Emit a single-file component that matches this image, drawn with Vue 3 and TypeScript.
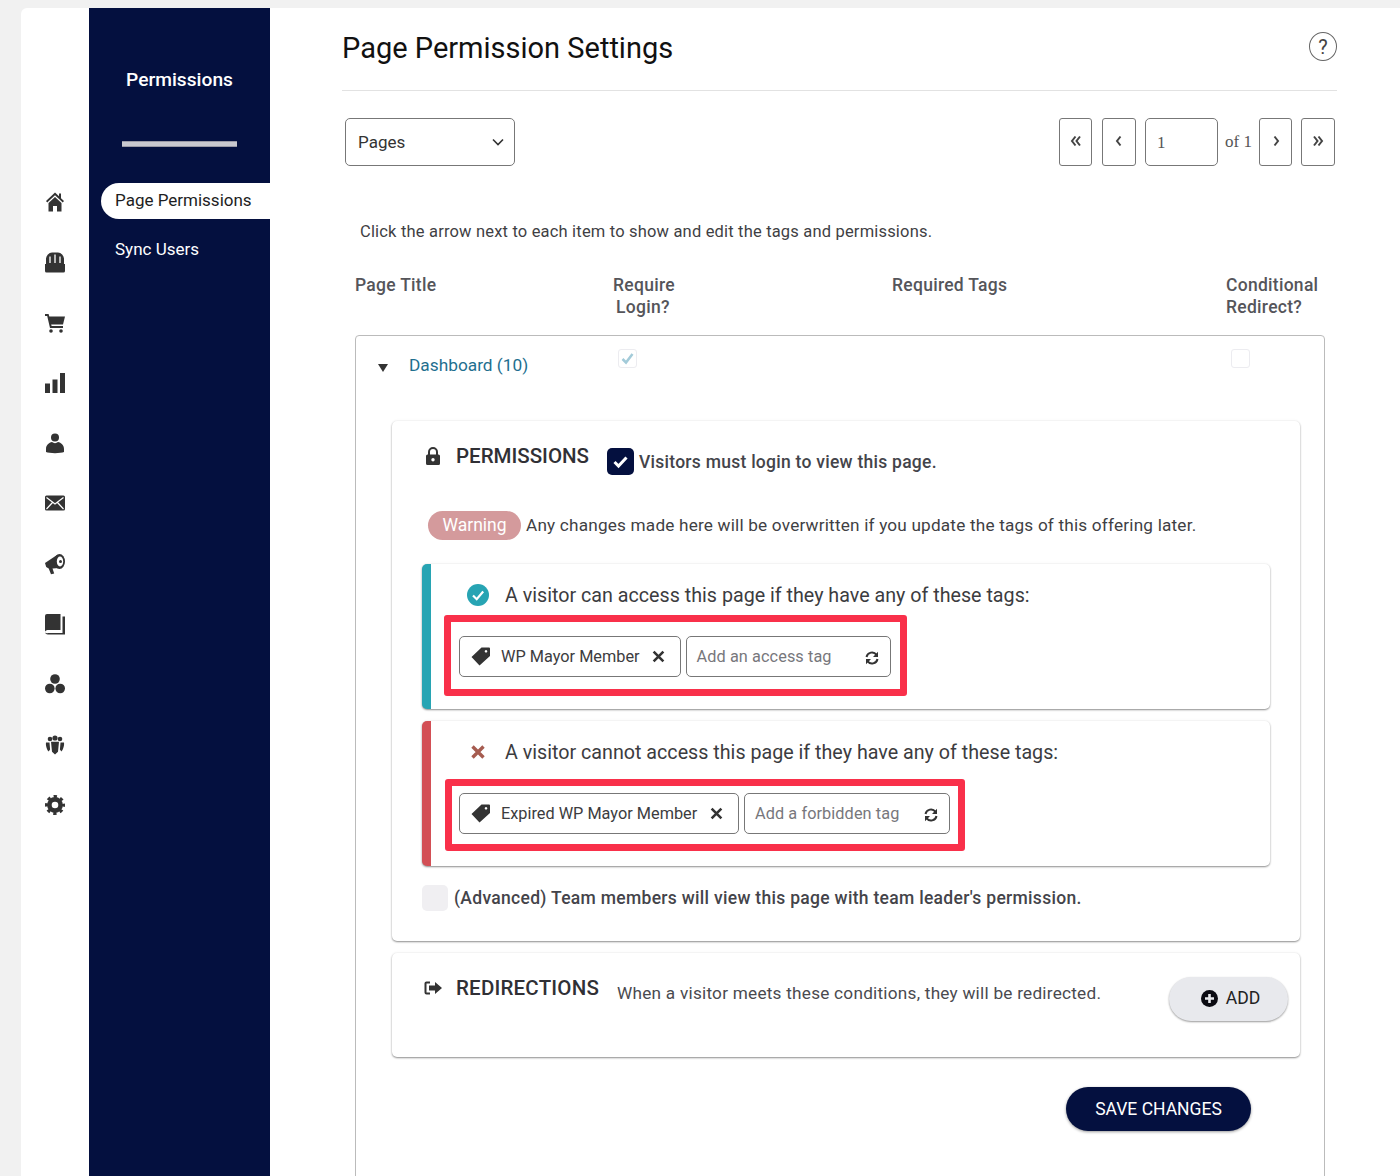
<script setup lang="ts">
interface Rule {
  kind: string
  text: string
  tag: string
  placeholder: string
}
const rules: Rule[] = [
  { kind: 'allow', text: 'A visitor can access this page if they have any of these tags:', tag: 'WP Mayor Member', placeholder: 'Add an access tag' },
  { kind: 'deny', text: 'A visitor cannot access this page if they have any of these tags:', tag: 'Expired WP Mayor Member', placeholder: 'Add a forbidden tag' },
]
</script>

<template>
  <div class="app">
    <nav class="rail">
      <svg class="ri" viewBox="0 0 20 20"><path d="M10 .5 1 9 2.200 10.500 10 3.300 17.800 10.500 19 9 16 6.200V1.500h-2v2.800zM10 5.100 3.500 11.100V19.500H8V14h4v5.500h4.500V11.100z"/></svg>
      <svg class="ri" viewBox="0 0 20 20"><path d="M0 12h20v7a1.500 1.500 0 0 1-1.500 1.500H1.500A1.500 1.500 0 0 1 0 19zM1 13V6.500a6.500 6.500 0 0 1 6-6h6a6.500 6.500 0 0 1 6 6V13z"/><path d="M5 11V4.500M10 11V2.500M15 11V4.500" stroke="#fff" stroke-width="1.300" fill="none"/></svg>
      <svg class="ri" viewBox="0 0 20 20"><path d="M0 1h3.600l.7 2.500H20l-2 8H6.200l.4 1.500H18v2H5L2.200 3H0z"/><circle cx="6" cy="18" r="1.800"/><circle cx="16" cy="18" r="1.800"/></svg>
      <svg class="ri" viewBox="0 0 20 20"><path d="M0 10.500h5V20H0zM7.500 6.500h5V20h-5zM15 0h5v20h-5z"/></svg>
      <svg class="ri" viewBox="0 0 20 20"><circle cx="10" cy="4.500" r="4"/><path d="M1 19v-3c0-4 3-6.500 6-7 1.500 1.500 4.500 1.500 6 0 3 .5 6 3 6 7v3c-3 1.500-15 1.500-18 0z"/></svg>
      <svg class="ri" viewBox="0 0 20 20"><rect y="2.500" width="20" height="15" rx="1.500"/><path d="M1.500 4.500 10 11 18.500 4.500M1.500 16 7.500 9.500M18.500 16 12.500 9.500" stroke="#fff" stroke-width="1.200" fill="none"/></svg>
      <svg class="ri" viewBox="0 0 20 20"><path d="M0 9 12 1 14 14 7.500 14.500 9.200 19.500 6 20.300 3.700 14.500 1.200 13z"/><ellipse cx="14.500" cy="7.500" rx="5.500" ry="7.500"/><ellipse cx="15" cy="7.500" rx="3.200" ry="5" fill="#fff"/><circle cx="15.500" cy="7.500" r="1.500"/></svg>
      <svg class="ri" viewBox="0 0 20 20"><path d="M2 0H15.500V16H3a3 3 0 0 0-3 1.500V2a2 2 0 0 1 2-2z"/><path d="M17.500 2.500H20V20.500H3a3 3 0 0 1-3-2 3 3 0 0 0 3 0.500H17.500z"/></svg>
      <svg class="ri" viewBox="0 0 20 20"><circle cx="10" cy="5" r="4.800"/><circle cx="4.800" cy="14.500" r="4.800"/><circle cx="15.200" cy="14.500" r="4.800"/></svg>
      <svg class="ri" viewBox="0 0 20 20"><circle cx="5" cy="4" r="2.300"/><circle cx="10" cy="3" r="2.600"/><circle cx="15" cy="4" r="2.300"/><path d="M1 7.500h3.500l.6 7-1.500 2C2 15 .5 10.500 1 7.500zM19 7.500h-3.500l-.6 7 1.500 2c1.600-1.500 3.100-6 2.600-9zM6 6.800h8l-1 10-3 2.700-3-2.700z"/></svg>
      <svg class="ri" viewBox="0 0 20 20"><circle cx="10" cy="10" r="5.600" fill="none" stroke="#333" stroke-width="4.600"/><circle cx="10" cy="10" r="8.500" fill="none" stroke="#333" stroke-width="3" stroke-dasharray="3.300 3.380" stroke-dashoffset="1.650"/></svg>
    </nav>

    <aside class="side">
      <h2 class="side-title">Permissions</h2>
      <div class="side-rule"></div>
      <a class="side-link active">Page Permissions</a>
      <a class="side-link">Sync Users</a>
    </aside>

    <main class="main">
      <header class="head">
        <h1>Page Permission Settings</h1>
        <span class="help">?</span>
      </header>

      <div class="bar">
        <div class="select">
          <span>Pages</span>
          <svg width="14" height="14" viewBox="0 0 14 14"><path d="M2 4.500 7 9.500 12 4.500" fill="none" stroke="#333" stroke-width="1.600"/></svg>
        </div>
        <div class="pager">
          <button class="pg first">
            <svg width="12" height="12" viewBox="0 0 12 12"><path d="M5.500 1.500 2 6l3.500 4.500M10 1.500 6.500 6l3.500 4.500" fill="none" stroke="#444" stroke-width="2"/></svg>
          </button>
          <button class="pg">
            <svg width="12" height="12" viewBox="0 0 12 12"><path d="M7.500 1.500 4 6l3.500 4.500" fill="none" stroke="#444" stroke-width="2"/></svg>
          </button>
          <span class="pg-input">1</span>
          <span class="of">of 1</span>
          <button class="pg next">
            <svg width="12" height="12" viewBox="0 0 12 12"><path d="M4.500 1.500 8 6l-3.500 4.500" fill="none" stroke="#444" stroke-width="2"/></svg>
          </button>
          <button class="pg">
            <svg width="12" height="12" viewBox="0 0 12 12"><path d="M2 1.500 5.500 6 2 10.500M6.500 1.500 10 6l-3.500 4.500" fill="none" stroke="#444" stroke-width="2"/></svg>
          </button>
        </div>
      </div>

      <p class="hint">Click the arrow next to each item to show and edit the tags and permissions.</p>

      <div class="cols">
        <span class="c1">Page Title</span>
        <span class="c2">Require<br /><span class="ind">Login?</span></span>
        <span class="c3">Required Tags</span>
        <span class="c4">Conditional<br />Redirect?</span>
      </div>

      <section class="box">
        <div class="row">
          <svg class="tri" width="10" height="8" viewBox="0 0 10 8"><path d="M0 0h10L5 8z"/></svg>
          <a class="page-link">Dashboard (10)</a>
          <span class="mini on">
            <svg width="15" height="15" viewBox="0 0 15 15"><path d="M2.500 8 6 11.500 12.500 3" fill="none" stroke="#a3cbd9" stroke-width="2.500"/></svg>
          </span>
          <span class="mini off"></span>
        </div>

        <div class="card perms">
          <div class="perm-head">
            <svg class="lock" width="14" height="18" viewBox="0 0 14 18"><path d="M3 8V5a4 4 0 0 1 8 0v3" fill="none" stroke="#333" stroke-width="2"/><path d="M1.500 7.500h11A1.500 1.500 0 0 1 14 9v7.500a1.500 1.500 0 0 1-1.500 1.500h-11A1.500 1.500 0 0 1 0 16.500V9a1.500 1.500 0 0 1 1.500-1.500z"/><circle cx="7" cy="12.700" r="1.700" fill="#fff"/></svg>
            <h3>PERMISSIONS</h3>
            <span class="check">
              <svg width="17" height="17" viewBox="0 0 17 17"><path d="M2.500 9 6.500 13 14.500 4.500" fill="none" stroke="#fff" stroke-width="3"/></svg>
            </span>
            <strong class="login">Visitors must login to view this page.</strong>
          </div>

          <div class="warn">
            <span class="pill">Warning</span>
            <span>Any changes made here will be overwritten if you update the tags of this offering later.</span>
          </div>

          <div v-for="r in rules" :key="r.kind" class="rule" :class="r.kind">
            <div class="rule-title">
              <svg v-if="r.kind === 'allow'" width="22" height="22" viewBox="0 0 22 22"><circle cx="11" cy="11" r="11" fill="#27a4b3"/><path d="M6 11.500 9.700 15.200 16.200 7.500" fill="none" stroke="#fff" stroke-width="2.200"/></svg>
              <svg v-else width="22" height="22" viewBox="0 0 22 22"><path d="M5.500 5.500 16.500 16.500M16.500 5.500 5.500 16.500" stroke="#a65c50" stroke-width="3.400"/></svg>
              <span>{{ r.text }}</span>
            </div>
            <div class="mark">
              <div class="tag">
                <svg class="tag-ico" width="19" height="19" viewBox="0 0 19 19"><path d="M10.500.5H18a1 1 0 0 1 1 1V9L8.500 18.500.5 10zM15 3a1.300 1.300 0 1 0 .01 0z" fill-rule="evenodd"/></svg>
                <span class="tag-text">{{ r.tag }}</span>
                <svg class="tag-x" width="13" height="13" viewBox="0 0 12 12"><path d="M1.500 1.500 10.500 10.500M10.500 1.500 1.500 10.500" stroke="#333" stroke-width="2.400"/></svg>
              </div>
              <div class="add">
                <span>{{ r.placeholder }}</span>
                <svg width="14" height="14" viewBox="0 0 14 14"><path d="M1.500 6A5.600 5.600 0 0 1 11.500 3.800M12.500 8A5.600 5.600 0 0 1 2.500 10.200" fill="none" stroke="#333" stroke-width="2"/><path d="M13 .8V6H8zM1 13.200V8h5z"/></svg>
              </div>
            </div>
          </div>

          <div class="adv">
            <span class="adv-box"></span>
            <strong>(Advanced) Team members will view this page with team leader's permission.</strong>
          </div>
        </div>

        <div class="card redir">
          <svg class="redir-ico" width="18" height="14" viewBox="0 0 18 14"><path d="M6 1.500H2.500a1 1 0 0 0-1 1v9a1 1 0 0 0 1 1H6" fill="none" stroke="#333" stroke-width="2"/><path d="M5 4.500h6V1l7 6-7 6V9.500H5z"/></svg>
          <h3>REDIRECTIONS</h3>
          <span class="redir-text">When a visitor meets these conditions, they will be redirected.</span>
          <button class="add-btn">
            <svg width="17" height="17" viewBox="0 0 17 17"><circle cx="8.500" cy="8.500" r="8.500" fill="#0b0b12"/><path d="M8.500 4v9M4 8.500h9" stroke="#e8e9ed" stroke-width="2.600"/></svg>
            ADD
          </button>
        </div>

        <div class="save-row">
          <button class="save">SAVE CHANGES</button>
        </div>
      </section>
    </main>
  </div>
</template>

<style scoped>
.app {
  display: flex;
  margin: 8px 0 0 21px;
  height: 1168px;
  overflow: hidden;
  background: #fff;
  border-top-left-radius: 6px;
  font-family: Roboto, "Liberation Sans", sans-serif;
  color: #3c3c40;
}
.rail {
  width: 68px;
  flex: none;
  display: flex;
  flex-direction: column;
  align-items: center;
  padding-top: 184px;
  gap: 40.3px;
}
.ri {
  width: 20px;
  height: 20px;
  fill: #333;
  flex: none;
  overflow: visible;
}
.side {
  width: 181px;
  flex: none;
  background: #04103f;
  color: #fff;
  display: flex;
  flex-direction: column;
}
.side-title {
  margin: 61px 0 0;
  font-size: 19.2px;
  line-height: 22px;
  font-weight: 500;
  text-align: center;
}
.side-rule {
  width: 115px;
  height: 6px;
  margin: 50px 0 0 33px;
  background: #c9c9d0;
  border-top: 1px solid #9a9aa6;
  border-bottom: 1px solid #9a9aa6;
  box-sizing: border-box;
}
.side-link {
  display: block;
  margin-left: 12px;
  padding-left: 14px;
  height: 36px;
  line-height: 35px;
  font-size: 17px;
}
.side-link.active {
  margin-top: 36px;
  background: #fff;
  color: #1d1d22;
  border-radius: 18px 0 0 18px;
}
.side-link + .side-link {
  margin-top: 13px;
}
.main {
  flex: 1;
  min-width: 0;
  padding: 0 63px 0 72px;
}
.head {
  display: flex;
  justify-content: space-between;
  align-items: flex-start;
  height: 82px;
  border-bottom: 1px solid #e2e2e2;
}
.head h1 {
  margin: 21px 0 0;
  font-size: 29px;
  line-height: 38px;
  font-weight: 400;
  color: #111;
}
.help {
  width: 26px;
  height: 27px;
  margin-top: 24px;
  border: 1px solid #666;
  border-radius: 50%;
  display: flex;
  align-items: center;
  justify-content: center;
  font-size: 20px;
  color: #444;
}
.bar {
  display: flex;
  justify-content: space-between;
  align-items: center;
  margin: 27px 2px 0 3px;
}
.select {
  width: 170px;
  height: 48px;
  box-sizing: border-box;
  border: 1px solid #777;
  border-radius: 5px;
  padding: 0 9px 0 12px;
  display: flex;
  align-items: center;
  justify-content: space-between;
  font-size: 17px;
  color: #333;
}
.pager {
  display: flex;
  align-items: center;
  font-family: "Liberation Serif", serif;
  font-size: 17px;
  color: #555;
}
.pg {
  width: 34px;
  height: 48px;
  box-sizing: border-box;
  padding: 0;
  margin-right: 9px;
  background: #fff;
  border: 1px solid #777;
  border-radius: 3px;
  display: flex;
  align-items: center;
  justify-content: center;
}
.pg.first {
  width: 33px;
  margin-right: 10px;
}
.pg.next {
  width: 33px;
}
.pg svg {
  margin-top: -3px;
}
.pg:last-child {
  margin-right: 0;
}
.pg-input {
  width: 73px;
  height: 48px;
  box-sizing: border-box;
  border: 1px solid #777;
  border-radius: 5px;
  padding-left: 11px;
  line-height: 47px;
}
.of {
  width: 41px;
  padding-left: 7px;
  box-sizing: border-box;
}
.hint {
  margin: 56px 0 0 18px;
  font-size: 16.5px;
  letter-spacing: 0.18px;
  line-height: 20px;
  color: #3f3f44;
}
.cols {
  display: flex;
  margin: 32px 0 0 13px;
  font-size: 17.5px;
  letter-spacing: 0.28px;
  line-height: 22px;
  font-weight: 500;
  color: #55555a;
  height: 61px;
}
.c1 { width: 258px; }
.c2 { width: 279px; }
.c3 { width: 334px; }
.ind { margin-left: 3px; }
.box {
  margin: 0 12px 0 13px;
  padding: 0 24px 60px 36px;
  border: 1px solid #bbb;
  border-radius: 4px;
}
.row {
  height: 85px;
  display: flex;
  align-items: flex-start;
}
.tri {
  margin: 28px 0 0 -14px;
  fill: #333;
}
.page-link {
  margin: 18px 0 0 21px;
  width: 209px;
  font-size: 17.3px;
  line-height: 22px;
  color: #1f6f8f;
}
.mini {
  width: 19px;
  height: 19px;
  box-sizing: border-box;
  border: 1px solid #ececf0;
  border-radius: 3px;
  margin-top: 13px;
  display: flex;
  align-items: center;
  justify-content: center;
}
.mini.off {
  margin-left: 594px;
}
.card {
  background: #fff;
  border-radius: 5px;
  box-shadow: 0 1px 2px rgba(0, 0, 0, 0.45), 0 -1px 3px rgba(0, 0, 0, 0.03);
}
.perms {
  height: 520px;
  padding: 0 30px;
  box-sizing: border-box;
}
.perm-head {
  display: flex;
  align-items: flex-start;
  height: 89px;
}
.lock {
  margin: 26px 0 0 4px;
  fill: #333;
}
.perm-head h3,
.redir h3 {
  margin: 0;
  font-size: 20.5px;
  line-height: 24px;
  font-weight: 500;
  color: #303035;
}
.perm-head h3 {
  margin: 23px 18px 0 16px;
}
.check {
  width: 27px;
  height: 27px;
  margin-top: 27px;
  background: #04103f;
  border-radius: 5px;
  display: flex;
  align-items: center;
  justify-content: center;
  flex: none;
}
.login {
  margin: 30px 0 0 5px;
  font-size: 17.5px;
  letter-spacing: 0.26px;
  line-height: 22px;
  font-weight: 500;
  color: #44444a;
}
.warn {
  display: flex;
  align-items: center;
  gap: 5px;
  margin-left: 6px;
  height: 30px;
  font-size: 17.2px;
  letter-spacing: 0.19px;
  color: #3f3f44;
}
.pill {
  width: 93px;
  height: 29px;
  line-height: 29px;
  background: #d49a9c;
  color: #fff;
  text-align: center;
  border-radius: 15px;
  font-size: 17.5px;
  letter-spacing: 0;
}
.rule {
  height: 145px;
  box-sizing: border-box;
  background: #fff;
  border-left: 9px solid #27a4b3;
  border-radius: 5px;
  box-shadow: 0 1px 2px rgba(0, 0, 0, 0.45), 0 -1px 3px rgba(0, 0, 0, 0.03);
  margin-top: 12px;
  padding-left: 13px;
}
.rule.allow {
  margin-top: 24px;
}
.rule.deny {
  border-left-color: #d34f55;
}
.rule-title {
  display: flex;
  align-items: center;
  gap: 16px;
  height: 62px;
  padding-left: 23px;
  font-size: 19.7px;
  color: #3c3c40;
}
.rule.allow .rule-title {
  height: 40px;
  padding-top: 11px;
}
.mark {
  display: inline-flex;
  gap: 5px;
  box-sizing: border-box;
  border: 7px solid #f9304a;
  border-radius: 3px;
  padding: 14px 9px 12px 8px;
}
.rule.deny .mark {
  margin-top: -4px;
  margin-left: 1px;
  padding: 7px 8px 10px 7px;
}
.rule.deny .tag {
  width: 280px;
}
.rule.deny .add {
  width: 206px;
}
.tag,
.add {
  height: 41px;
  box-sizing: border-box;
  border: 1px solid #777;
  border-radius: 5px;
  display: flex;
  align-items: center;
  font-size: 16.3px;
}
.tag {
  padding: 0 15px 0 11px;
  color: #3c3c40;
}
.tag-ico {
  fill: #333;
  margin-right: 11px;
}
.tag-x {
  margin-left: auto;
}
.tag-text {
  margin-right: 12px;
}
.add {
  width: 205px;
  padding: 0 11px 0 10px;
  justify-content: space-between;
  letter-spacing: 0.08px;
  color: #77777c;
}
.add svg {
  fill: #333;
  margin-top: 3px;
}
.adv {
  display: flex;
  align-items: center;
  gap: 6px;
  margin-top: 19px;
  font-size: 17.5px;
  letter-spacing: 0.3px;
  color: #44444a;
}
.adv strong {
  font-weight: 500;
}
.adv-box {
  width: 26px;
  height: 26px;
  background: #f0eff2;
  border-radius: 5px;
}
.redir {
  height: 104px;
  margin-top: 12px;
  padding: 0 12px 0 32px;
  display: flex;
  align-items: flex-start;
}
.redir-ico {
  margin-top: 28px;
  fill: #333;
  flex: none;
}
.redir h3 {
  margin: 23px 18px 0 14px;
  letter-spacing: 0.2px;
}
.redir-text {
  margin-top: 29px;
  font-size: 17.2px;
  letter-spacing: 0.24px;
  line-height: 22px;
  color: #4a4a4f;
}
.add-btn {
  width: 119px;
  height: 44px;
  margin: 24px 0 0 auto;
  padding: 0 0 2px 4px;
  border: none;
  border-radius: 22px;
  background: #e8e9ed;
  box-shadow: 0 1px 2px rgba(0, 0, 0, 0.4);
  display: flex;
  align-items: center;
  justify-content: center;
  gap: 8px;
  font-family: inherit;
  font-size: 17.6px;
  color: #222;
}
.save-row {
  display: flex;
  justify-content: flex-end;
  margin: 30px 49px 0 0;
}
.save {
  width: 185px;
  height: 44px;
  border: none;
  border-radius: 22px;
  background: #04103f;
  box-shadow: 0 1px 3px rgba(0, 0, 0, 0.4);
  color: #fff;
  font-family: inherit;
  font-size: 17.5px;
}
</style>

<style>
html,
body {
  margin: 0;
  background: #f1f1f1;
}
</style>
